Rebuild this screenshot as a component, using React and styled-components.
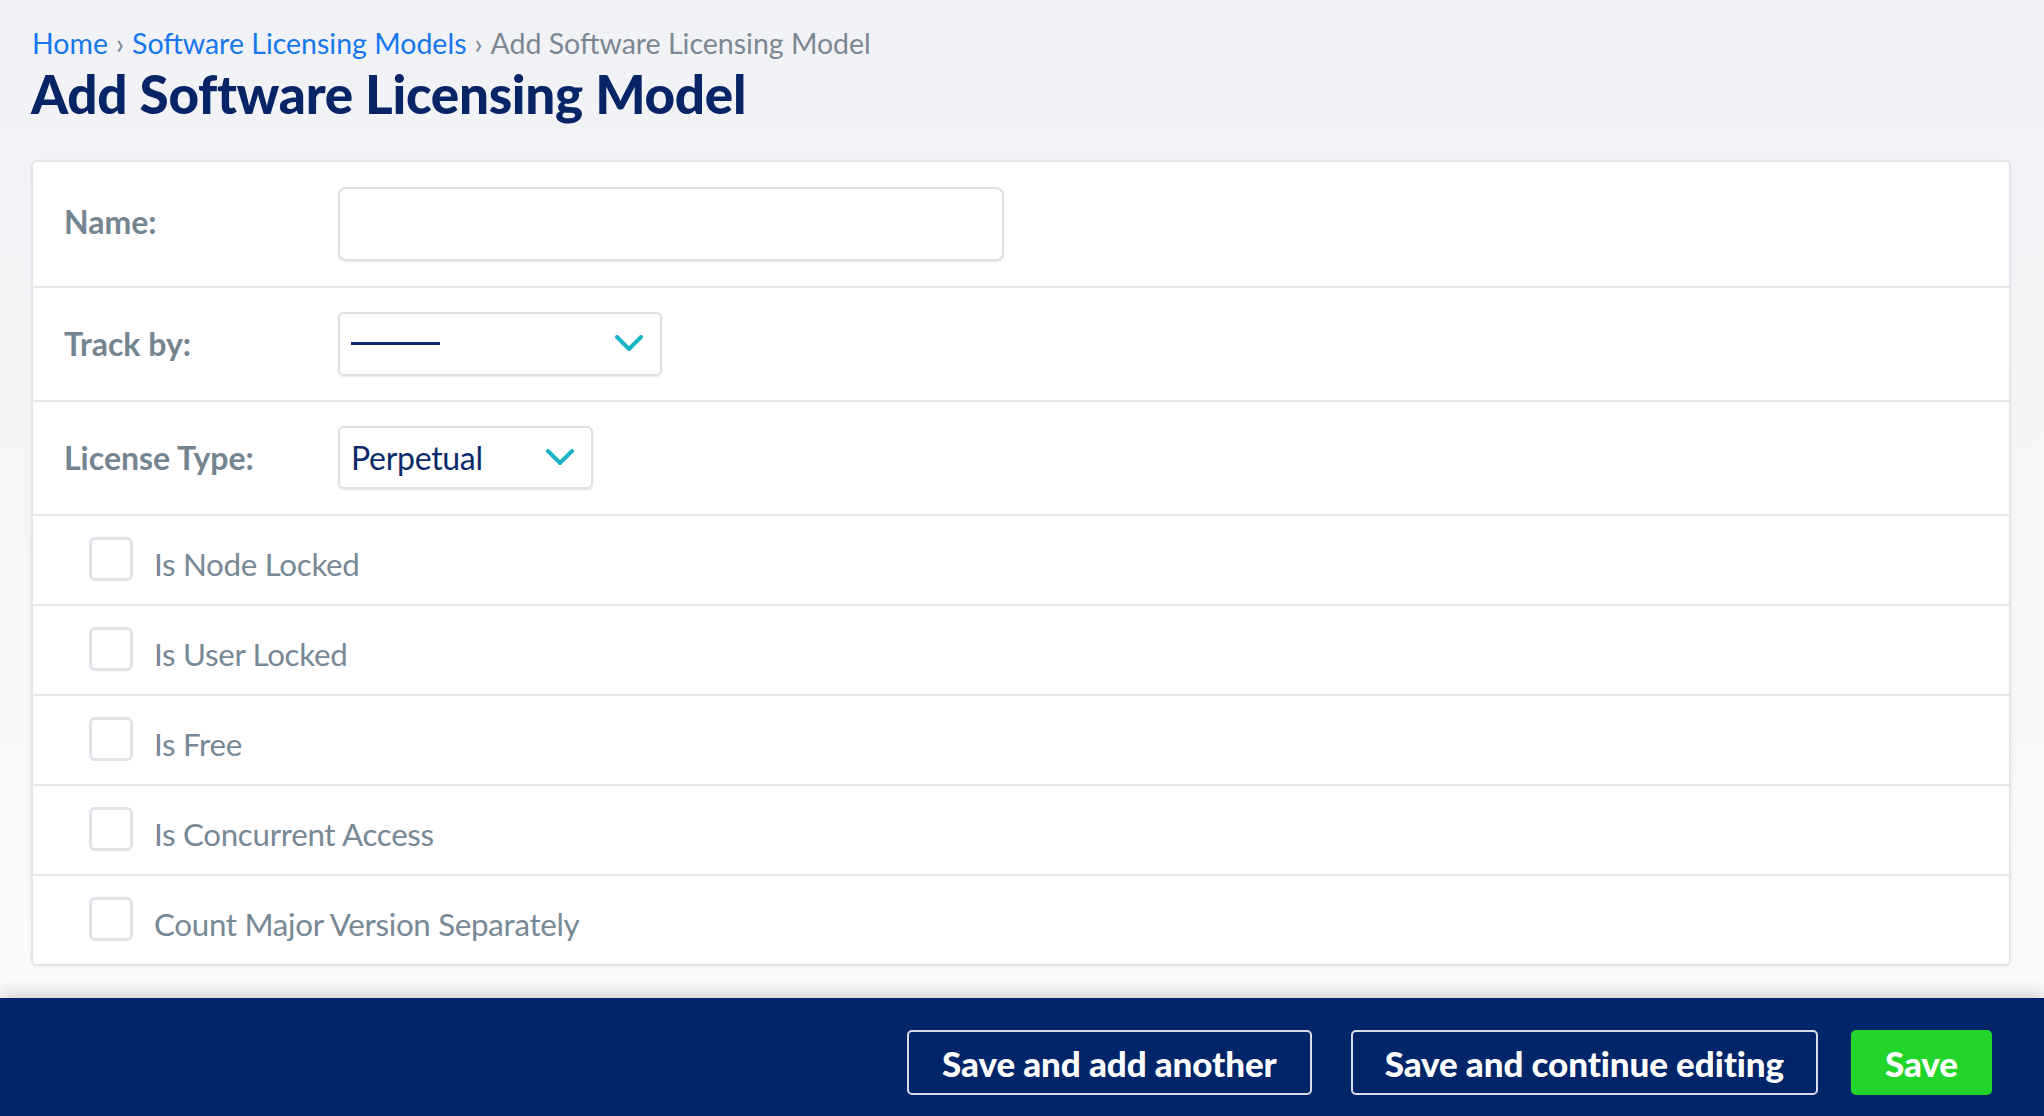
import React from 'react';
import styled, { createGlobalStyle } from 'styled-components';

const GlobalStyle = createGlobalStyle`
  html, body {
    margin: 0;
    padding: 0;
  }
  body {
    font-family: Lato, 'Noto Sans', sans-serif;
    background: linear-gradient(180deg, #f1f2f5 0%, #f7f7f9 60%, #fbfbfb 100%);
    min-height: 100vh;
  }
  * {
    box-sizing: border-box;
  }
`;

const Page = styled.div`
  min-height: 100vh;
  display: flex;
  flex-direction: column;
`;

const Main = styled.main`
  padding: 26px 33px 0 32px;
`;

const Crumbs = styled.nav`
  font-size: 28.5px;
  line-height: 1.2;
  color: #7b8794;
  a {
    color: #1677ee;
    text-decoration: none;
  }
  .sep {
    margin: 0 8px;
  }
`;

const Title = styled.h1`
  margin: 2px 0 34px -1px;
  font-size: 53px;
  line-height: 1.2;
  font-weight: 900;
  color: #072467;
  letter-spacing: -0.3px;
`;

const Card = styled.section`
  margin-left: -1px;
  background: #fff;
  border: 2px solid #e2e4e8;
  border-radius: 6px;
  box-shadow: 0 1px 3px rgba(0, 0, 0, 0.06);
`;

const Row = styled.div`
  display: flex;
  align-items: center;
  min-height: ${(p) => p.$height}px;
  padding-left: ${(p) => (p.$check ? 56 : 31)}px;
  border-bottom: 2px solid #e2e5e9;
  &:last-child {
    border-bottom: none;
    min-height: ${(p) => p.$height - 2}px;
  }
`;

const Label = styled.label`
  width: 274px;
  flex-shrink: 0;
  font-size: 32px;
  font-weight: 700;
  color: #748592;
  margin-top: ${(p) => p.$shift || 0}px;
`;

const TextInput = styled.input`
  width: 666px;
  height: 74px;
  border: 2px solid #dcdfe3;
  border-radius: 8px;
  box-shadow: 0 1px 2px rgba(0, 0, 0, 0.1);
  font: inherit;
  font-size: 30px;
  padding: 0 14px;
  outline: none;
`;

const SelectBox = styled.div`
  width: ${(p) => p.$width}px;
  height: ${(p) => p.$boxHeight}px;
  display: flex;
  align-items: center;
  justify-content: space-between;
  padding: 0 17px 0 11px;
  border: 2px solid #dcdfe3;
  border-radius: 6px;
  box-shadow: 0 1px 2px rgba(0, 0, 0, 0.1);
  font-size: 32px;
  color: #0a2a6a;
  letter-spacing: -0.3px;
`;

const Dash = styled.span`
  display: block;
  width: 89px;
  height: 3px;
  background: #0a2a6a;
`;

const Chevron = () => (
  <svg width="28" height="17" viewBox="0 0 28 17" fill="none">
    <path d="M2 2l12 12L26 2" stroke="#19b5c7" strokeWidth="4" strokeLinecap="round" strokeLinejoin="round" />
  </svg>
);

const Box = styled.span`
  width: 44px;
  height: 44px;
  flex-shrink: 0;
  border: 3px solid #dfe3e8;
  border-radius: 6px;
  margin-top: -2px;
`;

const CheckText = styled.span`
  margin: 8px 0 0 21px;
  font-size: 31.3px;
  color: #778896;
  letter-spacing: -0.3px;
`;

const Footer = styled.footer`
  margin-top: auto;
  height: 118px;
  background: #002669;
  box-shadow: 0 -6px 14px rgba(0, 0, 0, 0.14);
  display: flex;
  justify-content: flex-end;
  align-items: flex-start;
  padding: 32px 52px 0 0;
  gap: 33px;
`;

const Button = styled.button`
  height: 65px;
  padding: 0 ${(p) => p.$pad}px;
  margin-right: ${(p) => p.$after || 0}px;
  border: 2px solid ${(p) => (p.$primary ? '#21d52a' : '#d9dce6')};
  background: ${(p) => (p.$primary ? '#21d52a' : 'transparent')};
  border-radius: 5px;
  color: #fff;
  font-family: Lato, sans-serif;
  font-weight: 900;
  font-size: 35px;
  letter-spacing: -0.1px;
  cursor: pointer;
`;

const checks = ['Is Node Locked', 'Is User Locked', 'Is Free', 'Is Concurrent Access', 'Count Major Version Separately'];

const App = () => {
  return (
    <Page>
      <GlobalStyle />
      <Main>
        <Crumbs>
          <a href='#'>Home</a>
          <span className='sep'>›</span>
          <a href='#'>Software Licensing Models</a>
          <span className='sep'>›</span>
          Add Software Licensing Model
        </Crumbs>
        <Title>Add Software Licensing Model</Title>
        <Card>
          <Row $height={126}>
            <Label $shift={-4}>Name:</Label>
            <TextInput type='text' />
          </Row>
          <Row $height={114}>
            <Label>Track by:</Label>
            <SelectBox $width={324} $boxHeight={64}>
              <Dash />
              <Chevron />
            </SelectBox>
          </Row>
          <Row $height={114}>
            <Label>License Type:</Label>
            <SelectBox $width={255} $boxHeight={63}>
              <span>Perpetual</span>
              <Chevron />
            </SelectBox>
          </Row>
          {checks.map((c) => (
            <Row key={c} $height={90} $check>
              <Box />
              <CheckText>{c}</CheckText>
            </Row>
          ))}
        </Card>
      </Main>
      <Footer>
        <Button $pad={33} $after={6}>Save and add another</Button>
        <Button $pad={32}>Save and continue editing</Button>
        <Button $pad={32} $primary>Save</Button>
      </Footer>
    </Page>
  );
};

export default App;
